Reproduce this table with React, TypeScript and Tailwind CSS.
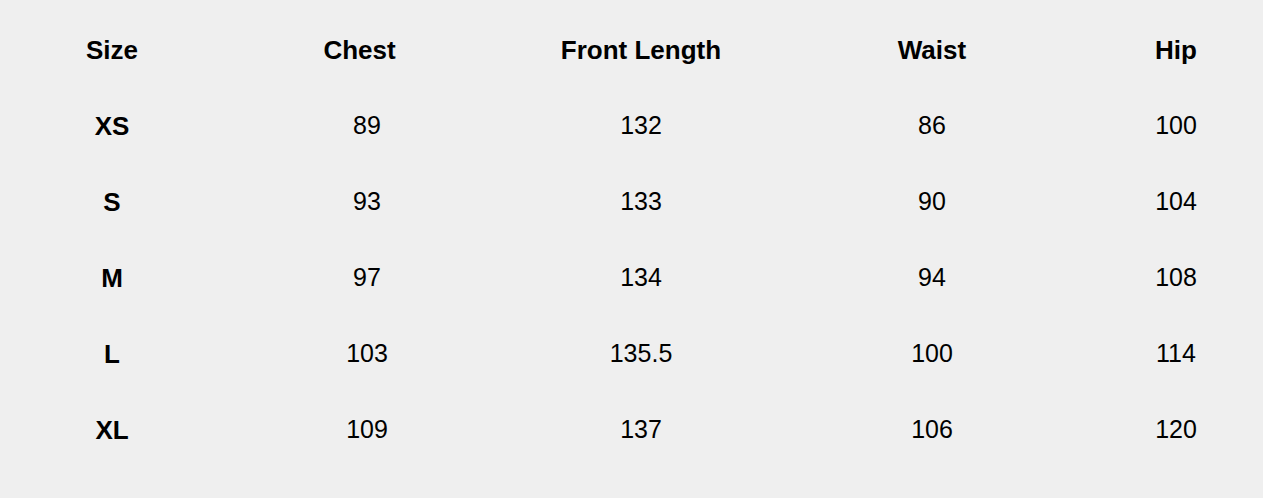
const headers = ["Size", "Chest", "Front Length", "Waist", "Hip"];

const rows = [
  ["XS", "89", "132", "86", "100"],
  ["S", "93", "133", "90", "104"],
  ["M", "97", "134", "94", "108"],
  ["L", "103", "135.5", "100", "114"],
  ["XL", "109", "137", "106", "120"],
];

const grid = "grid grid-cols-[224px_286px_262px_320px_1fr] h-[76px] items-center text-center";

export default function App() {
  return (
    <div
      className="min-h-[498px] w-full bg-[#efefef] pt-[12px] text-black"
      style={{ fontFamily: '"Liberation Sans", Arial, sans-serif' }}
    >
      <div className={grid + " text-[26px] font-bold"}>
        <div>{headers[0]}</div>
        <div className="pr-[15px]">{headers[1]}</div>
        <div>{headers[2]}</div>
        <div>{headers[3]}</div>
        <div className="pr-[3px]">{headers[4]}</div>
      </div>
      {rows.map((r) => (
        <div key={r[0]} className={grid + " text-[25px]"}>
          <div className="text-[26px] font-bold">{r[0]}</div>
          <div>{r[1]}</div>
          <div>{r[2]}</div>
          <div>{r[3]}</div>
          <div className="pr-[3px]">{r[4]}</div>
        </div>
      ))}
    </div>
  );
}
